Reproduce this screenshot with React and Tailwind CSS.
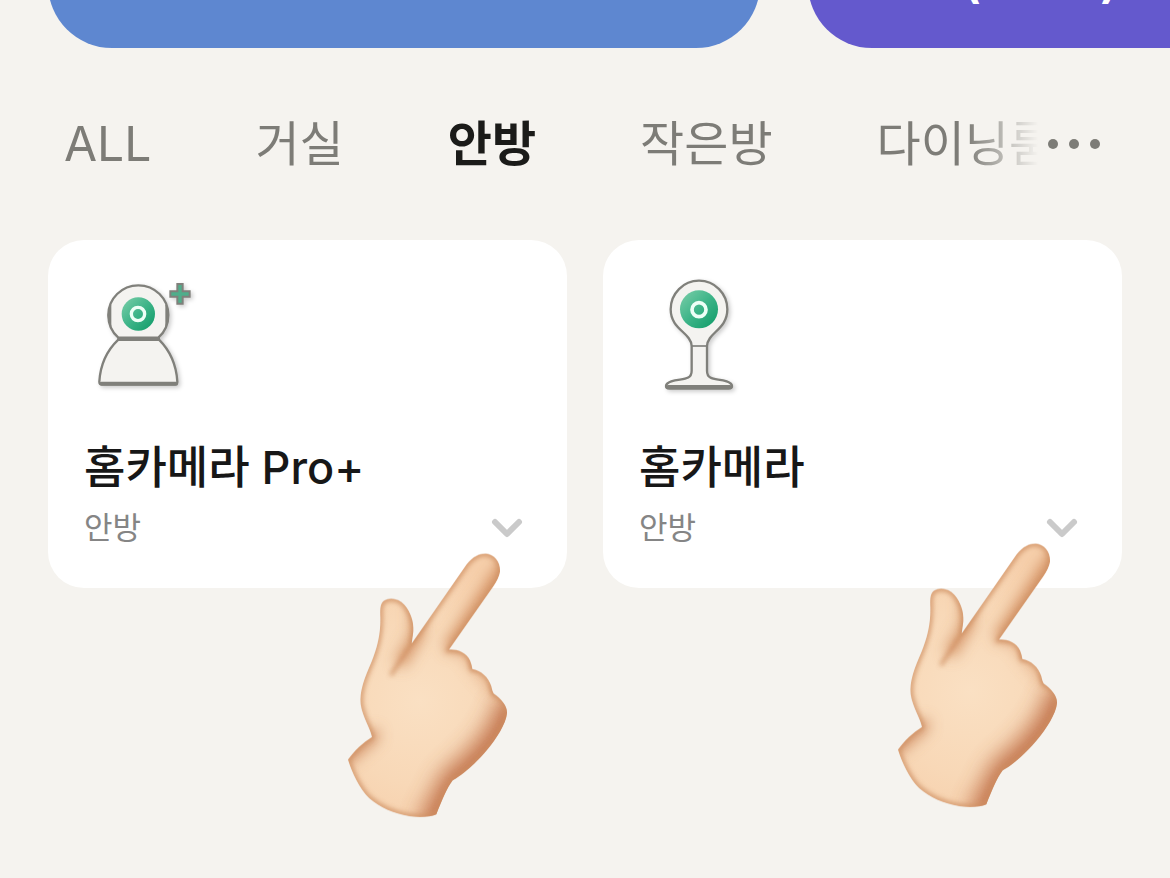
import { useId, useState } from "react";
import { ChevronDown } from "lucide-react";

const rooms = ["ALL", "거실", "안방", "작은방", "다이닝룸"];

const devices = [
  { name: "홈카메라 Pro+", room: "안방", Icon: CameraProIcon, hand: "-right-[3px] top-[261px]" },
  { name: "홈카메라", room: "안방", Icon: CameraIcon, hand: "right-[2px] top-[251px]" },
];

function LensGradient({ id }) {
  return (
    <linearGradient id={id} x1="0" y1="0" x2="1" y2="1">
      <stop offset="0" stopColor="#7ccfaa" />
      <stop offset="0.5" stopColor="#3db488" />
      <stop offset="1" stopColor="#0d9a66" />
    </linearGradient>
  );
}

function CameraProIcon() {
  const id = useId();
  return (
    <svg viewBox="12 33 360 360" className="size-[120px] drop-shadow-[2px_2px_2px_rgba(0,0,0,0.2)]" aria-hidden="true">
      <defs>
        <LensGradient id={id} />
      </defs>
      <g fill="#f4f3f0" stroke="#80807b" strokeWidth="7" strokeLinejoin="round">
        <path d="M115 218C94 200 85 178 85 150a90 89 0 0 1 180 0c0 28-9 50-30 68Z" />
        <path d="M115 224h122c34 34 52 76 55 126q0 8-8 8H66q-8 0-8-8c3-50 21-92 57-126Z" />
      </g>
      <path d="M92 119q-14 32 0 66ZM258 119q14 32 0 66Z" fill="#80807b" stroke="#80807b" strokeWidth="4" />
      <path d="M112 222h128" stroke="#80807b" strokeWidth="12" />
      <path d="M64 356h224" stroke="#80807b" strokeWidth="12" strokeLinecap="round" />
      <circle cx="175" cy="147" r="50" fill={`url(#${id})`} />
      <circle cx="174" cy="147" r="20" fill="none" stroke="#edfff6" strokeWidth="10" />
      <path d="M292 57h16v22h21v16h-21v21h-16V95h-21V79h21Z" fill="#4fae8b" stroke="#80807b" strokeWidth="6" />
    </svg>
  );
}

function CameraIcon() {
  const id = useId();
  return (
    <svg viewBox="-3 33 360 360" className="size-[120px] drop-shadow-[2px_2px_2px_rgba(0,0,0,0.2)]" aria-hidden="true">
      <defs>
        <LensGradient id={id} />
      </defs>
      <path
        d="M155 243C153 202 92 194 92 133a85 86 0 0 1 170 0c0 61-59 69-61 110v74c0 32 32 22 59 32q16 6 16 14c0 6-4 8-10 8H88c-6 0-10-2-10-8q0-8 16-14c27-10 61 0 61-32Z"
        fill="#f4f3f0"
        stroke="#80807b"
        strokeWidth="7"
        strokeLinejoin="round"
      />
      <path d="M155 243h46" stroke="#80807b" strokeWidth="5" />
      <path d="M84 366h186" stroke="#80807b" strokeWidth="12" strokeLinecap="round" />
      <circle cx="177" cy="133" r="57" fill={`url(#${id})`} />
      <circle cx="177" cy="134" r="21" fill="none" stroke="#edfff6" strokeWidth="11" />
    </svg>
  );
}

const handPath =
  "M245 428L410 190C430 165 450 157 468 158C492 160 512 182 510 212C508 225 500 242 490 256L357 446C378 444 408 452 420 478C424 488 426 496 427 504C452 508 476 528 484 556C486 566 488 572 491 578C515 594 532 616 531 636C528 668 500 712 470 748C440 784 400 820 368 838C350 862 335 900 319 940C300 948 270 950 240 946C190 938 150 920 118 892C88 864 64 810 54 776C72 750 100 724 126 708C122 684 98 650 92 610C88 570 104 530 124 484C142 440 152 400 151 350C150 325 150 308 162 299C180 288 206 292 224 312C242 334 252 362 250 390C248 408 246 420 245 428Z";

function PointingHand({ className }) {
  const id = useId();
  return (
    <svg
      viewBox="0 0 720 990"
      className={`pointer-events-none absolute z-10 h-[330px] w-[240px] ${className}`}
      aria-hidden="true"
    >
      <defs>
        <clipPath id={`${id}clip`}>
          <path d={handPath} />
        </clipPath>
        <radialGradient id={`${id}skin`} gradientUnits="userSpaceOnUse" cx="270" cy="600" r="420">
          <stop offset="0" stopColor="#fae0c3" />
          <stop offset="0.6" stopColor="#f8d8b7" />
          <stop offset="1" stopColor="#f6cfab" />
        </radialGradient>
        <filter id={`${id}soft`} x="-20%" y="-20%" width="140%" height="140%">
          <feGaussianBlur stdDeviation="8" />
        </filter>
        <filter id={`${id}wide`} x="-60%" y="-60%" width="220%" height="220%">
          <feGaussianBlur stdDeviation="32" />
        </filter>
        <filter id={`${id}mid`} x="-40%" y="-40%" width="180%" height="180%">
          <feGaussianBlur stdDeviation="20" />
        </filter>
      </defs>
      <g clipPath={`url(#${id}clip)`} fill="none" strokeLinecap="round">
        <path d={handPath} fill={`url(#${id}skin)`} />
        <path
          d="M545 630C526 700 466 780 378 846L320 960"
          stroke="#b9633a"
          strokeWidth="100"
          opacity="0.85"
          filter={`url(#${id}wide)`}
        />
        <g filter={`url(#${id}mid)`}>
          <path d="M524 200L366 434" stroke="#c9804f" strokeWidth="42" opacity="0.8" />
          <path d="M262 320V400L215 480" stroke="#c9804f" strokeWidth="36" opacity="0.75" />
          <path d="M50 770L128 704" stroke="#c9845a" strokeWidth="40" opacity="0.8" />
          <path d="M400 452L436 500L494 572" stroke="#d9966a" strokeWidth="24" opacity="0.6" />
        </g>
        <g filter={`url(#${id}soft)`}>
          <path d={handPath} stroke="#cf9064" strokeWidth="13" />
          <path d="M246 426L184 520" stroke="#c98556" strokeWidth="8" />
          <path d="M420 478L427 506M484 556L491 580" stroke="#c98556" strokeWidth="12" />
        </g>
      </g>
    </svg>
  );
}

function DeviceCard({ device }) {
  const { name, room, Icon, hand } = device;
  return (
    <article className="relative rounded-[36px] bg-white px-9 pt-9 pb-10">
      <Icon />
      <h2 className="mt-10 text-[45px] leading-[64px] font-medium whitespace-nowrap text-[#171717]">{name}</h2>
      <div className="mt-2 flex h-10 items-center justify-between">
        <p className="text-[31px] leading-9 text-[#858585]">{room}</p>
        <button type="button" aria-label={`${name} 펼치기`} className="text-[#cacaca]">
          <ChevronDown size={48} strokeWidth={3} />
        </button>
      </div>
      <PointingHand className={hand} />
    </article>
  );
}

export default function App() {
  const [active, setActive] = useState("안방");

  return (
    <main className="min-h-screen overflow-hidden bg-[#f5f3ef] font-[Inter,'Noto_Sans_CJK_KR',sans-serif]">
      {/* Banners are scrolled up, only the lower edge stays in view */}
      <div className="flex h-12 items-end gap-12 overflow-hidden pl-12">
        <div className="h-32 w-[712px] shrink-0 rounded-[64px] bg-[#5e87d0]" />
        <div className="flex h-32 w-[712px] shrink-0 items-center rounded-[64px] bg-[#6459cd] pb-1 pl-[156px] text-[44px] font-bold text-white">
          <span>(</span>
          <span className="ml-[120px]">)</span>
        </div>
      </div>

      <div className="mt-16 flex items-center pr-16">
        <nav className="flex min-w-0 flex-1 gap-[104px] overflow-hidden pl-16 [mask-image:linear-gradient(to_right,black_calc(100%-76px),transparent_calc(100%-4px))]">
          {rooms.map((room) => (
            <button
              key={room}
              type="button"
              onClick={() => setActive(room)}
              className={`shrink-0 text-[48px] leading-[64px] whitespace-nowrap ${
                active === room ? "font-bold text-[#1b1b19]" : "text-[#7d7c77]"
              }`}
            >
              {room}
            </button>
          ))}
        </nav>
        <button type="button" aria-label="더보기" className="flex shrink-0 gap-[11px] px-1.5">
          <span className="size-[10px] rounded-full bg-[#7d7c77]" />
          <span className="size-[10px] rounded-full bg-[#7d7c77]" />
          <span className="size-[10px] rounded-full bg-[#7d7c77]" />
        </button>
      </div>

      <section className="mt-16 grid grid-cols-2 gap-9 px-12">
        {devices.map((device) => (
          <DeviceCard key={device.name} device={device} />
        ))}
      </section>
    </main>
  );
}
